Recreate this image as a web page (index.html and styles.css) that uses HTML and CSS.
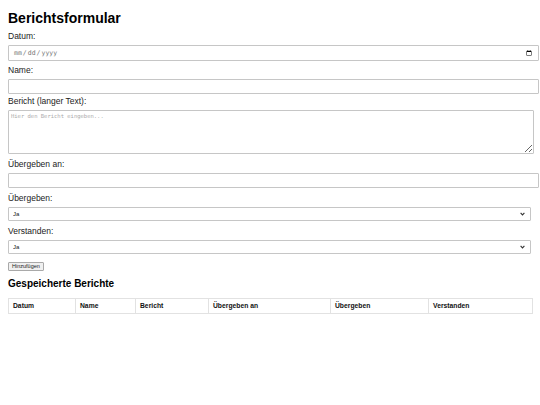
FILE: index.html
```html
<!DOCTYPE html>
<html lang="de">
<head>
<meta charset="utf-8">
<title>Berichtsformular</title>
<link rel="stylesheet" href="styles.css">
</head>
<body>
<h1 class="title">Berichtsformular</h1>
<form class="form">
  <label class="label" for="datum">Datum:</label>
  <input class="control control-date" type="date" id="datum">
  <label class="label" for="name">Name:</label>
  <input class="control control-text control-tight" type="text" id="name">
  <label class="label" for="bericht">Bericht (langer Text):</label>
  <textarea class="control control-area" id="bericht" placeholder="Hier den Bericht eingeben..."></textarea>
  <label class="label" for="an">Übergeben an:</label>
  <input class="control control-text" type="text" id="an">
  <label class="label" for="uebergeben">Übergeben:</label>
  <div class="select-wrap">
    <select class="control control-select" id="uebergeben">
      <option>Ja</option>
      <option>Nein</option>
    </select>
    <svg class="select-arrow" width="5" height="4" viewBox="0 0 5 4"><path d="M0.6 0.8 L2.5 2.9 L4.4 0.8" fill="none" stroke="#333" stroke-width="1.1"/></svg>
  </div>
  <label class="label" for="verstanden">Verstanden:</label>
  <div class="select-wrap">
    <select class="control control-select" id="verstanden">
      <option>Ja</option>
      <option>Nein</option>
    </select>
    <svg class="select-arrow" width="5" height="4" viewBox="0 0 5 4"><path d="M0.6 0.8 L2.5 2.9 L4.4 0.8" fill="none" stroke="#333" stroke-width="1.1"/></svg>
  </div>
  <button class="btn" type="button">Hinzufügen</button>
</form>
<h2 class="subtitle">Gespeicherte Berichte</h2>
<table class="table">
  <colgroup>
    <col class="c-datum">
    <col class="c-name">
    <col class="c-bericht">
    <col class="c-an">
    <col class="c-ueb">
    <col class="c-verst">
  </colgroup>
  <thead>
    <tr>
      <th>Datum</th>
      <th>Name</th>
      <th>Bericht</th>
      <th>Übergeben an</th>
      <th>Übergeben</th>
      <th>Verstanden</th>
    </tr>
  </thead>
  <tbody></tbody>
</table>
</body>
</html>
```
FILE: styles.css
```css
html, body {
  background: #ffffff;
}
body {
  margin: 0;
  padding: 10px 8px;
  font-family: "Liberation Sans", Arial, sans-serif;
  color: #111;
}
.title {
  margin: 0 0 5px;
  font-size: 14px;
  line-height: 16px;
  font-weight: bold;
  color: #000;
}
.form {
  display: flex;
  flex-direction: column;
  align-items: flex-start;
}
.label {
  display: block;
  font-size: 8.5px;
  line-height: 10px;
  margin-bottom: 4px;
  color: #222;
}
.control {
  box-sizing: border-box;
  margin: 0 0 4px;
  border: 1px solid #c6c6c6;
  border-radius: 1px;
  background: #fff;
  padding: 0 4px;
}
.control-date {
  width: 531px;
  height: 16px;
  font-family: "DejaVu Sans Mono", monospace;
  font-size: 6.5px;
  color: #777;
}
.control-text {
  width: 531px;
  height: 15px;
  font-size: 7px;
  margin-bottom: 5px;
}
.control-tight {
  margin-bottom: 2px;
}
.control-area {
  width: 526px;
  height: 44px;
  padding: 2px;
  font-family: "DejaVu Sans Mono", monospace;
  font-size: 5.5px;
  resize: both;
  margin-bottom: 5px;
}
.control-area::placeholder {
  color: #aaa;
}
.select-wrap {
  position: relative;
  display: flex;
}
.control-select {
  appearance: none;
  -webkit-appearance: none;
  width: 523px;
  height: 14px;
  padding: 0 4px;
  margin-bottom: 5px;
  font-family: "Liberation Sans", Arial, sans-serif;
  font-size: 6px;
  color: #222;
}
.select-arrow {
  position: absolute;
  right: 6px;
  top: 5px;
  pointer-events: none;
}
.btn {
  margin-top: 3px;
  height: 9px;
  padding: 0 3px;
  font-family: "Liberation Sans", Arial, sans-serif;
  font-size: 5.5px;
  line-height: 7px;
  color: #222;
  background: #f0f0f0;
  border: 1px solid #a9a9a9;
  border-radius: 1px;
}
.subtitle {
  margin: 6px 0 8px;
  font-size: 10px;
  line-height: 13px;
  font-weight: bold;
  color: #000;
}
.table {
  width: 524px;
  border-collapse: collapse;
  table-layout: fixed;
}
.table th {
  border: 1px solid #e2e2e2;
  padding: 3px 4px;
  font-size: 6.75px;
  line-height: 8px;
  font-weight: bold;
  text-align: left;
  color: #111;
}
.c-datum { width: 67px; }
.c-name { width: 60px; }
.c-bericht { width: 73px; }
.c-an { width: 122px; }
.c-ueb { width: 98px; }
.c-verst { width: 104px; }
```
